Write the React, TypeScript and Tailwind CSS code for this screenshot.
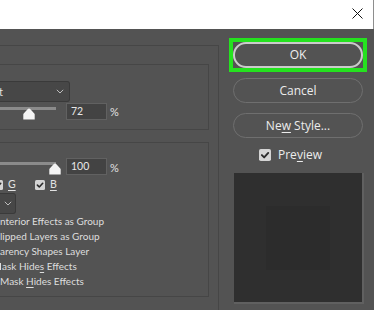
import React from "react";

function Check({ size = 10 }: { size?: number }) {
  return (
    <svg width={size} height={size} viewBox="0 0 10 10" className="block">
      <rect x="0" y="0" width="10" height="10" rx="1.5" fill="#d4d4d4" />
      <path d="M2.4 5.1 L4.3 7 L7.7 3.3" fill="none" stroke="#2b2b2b" strokeWidth="1.6" strokeLinecap="round" strokeLinejoin="round" />
    </svg>
  );
}

function Chevron() {
  return (
    <svg width="8" height="5" viewBox="0 0 8 5" className="block">
      <path d="M0.8 0.8 L4 4 L7.2 0.8" fill="none" stroke="#bdbdbd" strokeWidth="1" />
    </svg>
  );
}

function Thumb() {
  return (
    <svg width="12" height="12" viewBox="0 0 12 12" className="block">
      <path d="M6 0.5 C6.6 0.5 7 0.9 7.4 1.3 L11.3 5.6 C11.6 5.9 11.7 6.2 11.7 6.6 V11.5 H0.3 V6.6 C0.3 6.2 0.4 5.9 0.7 5.6 L4.6 1.3 C5 0.9 5.4 0.5 6 0.5 Z" fill="#f4f4f4" />
    </svg>
  );
}

export default function App() {
  return (
    <div className="w-[374px] h-[310px] overflow-hidden bg-[#535353] font-['Open_Sans',sans-serif] text-[#e2e2e2]">
      {/* title bar */}
      <div className="h-[29px] bg-white flex justify-end items-start pt-[8px] pr-[10px] border-r border-[#8e8e8e]">
        <svg width="11" height="11" viewBox="0 0 11 11" className="block">
          <path d="M0.5 0.5 L10.5 10.5 M10.5 0.5 L0.5 10.5" stroke="#111" strokeWidth="1" />
        </svg>
      </div>

      <div className="flex h-[281px]">
        {/* left side */}
        <div className="w-[219px] shrink-0 pt-[16px]">
          <div className="h-[300px] border-t border-r border-[#464646] pt-[18px] pr-[9px]">
            {/* group 1 */}
            <div className="h-[66px] border-t border-r border-b border-[#464646]">
              <div className="mt-[16px] w-[70px] h-[21px] bg-[#474747] border border-l-0 border-[#3a3a3a] rounded-r-[3px] flex items-center justify-between pr-[5px] font-['Lato',sans-serif] text-[11px] leading-none">
                <span className="-ml-[1px]">t</span>
                <Chevron />
              </div>
              <div className="flex items-start h-[20px]">
                <div className="relative w-[56px] h-[19px]">
                  <div className="mt-[5px] h-[3px] bg-[#8b8b8b]" />
                  <div className="absolute left-[23px] top-[6px]">
                    <Thumb />
                  </div>
                </div>
                <div className="mt-[1px] ml-[10px] w-[41px] h-[17px] bg-[#434343] border border-[#616161] pl-[4px] flex items-center font-['Lato',sans-serif] text-[10.5px] leading-none text-[#e8e8e8]">
                  72
                </div>
                <div className="ml-[3px] mt-[4px] font-['Lato',sans-serif] text-[11px] leading-none">%</div>
              </div>
            </div>

            {/* group 2 */}
            <div className="mt-[12px] h-[155px] border-t border-r border-b border-[#464646]">
              <div className="mt-[15px] flex items-start h-[17px]">
                <div className="relative w-[56px] h-[17px]">
                  <div className="mt-[4px] h-[3px] bg-[#8b8b8b]" />
                  <div className="absolute left-[49px] top-[5px]">
                    <Thumb />
                  </div>
                </div>
                <div className="ml-[10px] w-[41px] h-[17px] bg-[#434343] border border-[#616161] pl-[4px] flex items-center font-['Lato',sans-serif] text-[10.5px] leading-none text-[#e8e8e8]">
                  100
                </div>
                <div className="ml-[3px] mt-[4px] font-['Lato',sans-serif] text-[11px] leading-none">%</div>
              </div>

              <div className="mt-[4px] -ml-[7px] grid grid-cols-[42px_auto] h-[11px] items-center font-['Lato',sans-serif] text-[10.5px] leading-none">
                <div className="flex items-center">
                  <Check />
                  <span className="ml-[5px] underline underline-offset-[2px]">G</span>
                </div>
                <div className="flex items-center">
                  <Check />
                  <span className="ml-[5px] underline underline-offset-[2px]">B</span>
                </div>
              </div>

              <div className="mt-[3px] w-[16px] h-[21px] bg-[#474747] border border-l-0 border-[#3a3a3a] rounded-r-[3px] flex items-center justify-end pr-[3px]">
                <Chevron />
              </div>

              <div className="font-['Lato',sans-serif] text-[10px] leading-[15px] text-[#dedede] whitespace-nowrap">
                <div>nterior Effects as Group</div>
                <div>lipped Layers as Group</div>
                <div>arency Shapes Layer</div>
                <div className="flex items-center">
                  <span className="w-[1px] h-[7px] bg-[#dedede] mr-[1px]" />
                  <span>
                    ask Hide<span className="underline underline-offset-[2px]">s</span> Effects
                  </span>
                </div>
                <div>
                  Mask <span className="underline underline-offset-[2px]">H</span>ides Effects
                </div>
              </div>
            </div>
          </div>
        </div>

        {/* right side */}
        <div className="flex-1 pl-[10px] pt-[9px]">
          <div className="w-[138px] h-[34px] border-4 border-[#25e21f]">
            <button className="w-[130px] h-[26px] rounded-full border-2 border-[#cbcbcb] text-[12px] leading-none text-[#efefef] flex items-center justify-center">
              OK
            </button>
          </div>
          <button className="mt-[6px] ml-[4px] w-[130px] h-[25px] rounded-full border border-[#6f6f6f] text-[12px] leading-none text-[#ececec] flex items-center justify-center">
            Cancel
          </button>
          <button className="mt-[10px] ml-[4px] w-[130px] h-[25px] rounded-full border border-[#6f6f6f] text-[12px] leading-none text-[#ececec] flex items-center justify-center">
            Ne<span className="underline underline-offset-[2px]">w</span>&nbsp;Style...
          </button>
          <div className="mt-[11px] ml-[30px] flex items-center h-[12px]">
            <Check size={12} />
            <span className="ml-[7px] text-[12px] leading-none text-[#ececec]">
              Pre<span className="underline underline-offset-[2px]">v</span>iew
            </span>
          </div>
          <div className="mt-[12px] ml-[5px] w-[130px] h-[131px] bg-[#2f2f2f] border-r-2 border-b-2 border-[#606060] pt-[33px] pl-[32px]">
            <div className="w-[64px] h-[64px] bg-[#2c2c2c]" />
          </div>
        </div>
      </div>
    </div>
  );
}
